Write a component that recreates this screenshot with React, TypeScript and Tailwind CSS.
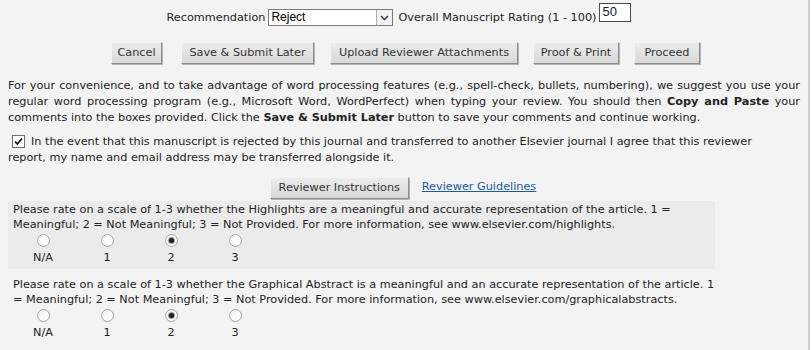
import type { ReactNode } from 'react';

const font = "font-['Verdana','DejaVu_Sans',sans-serif]";

function Btn({ w, children }: { w: string; children: ReactNode }) {
    return (
        <button
            type="button"
            className={`${w} h-[22px] shrink-0 border border-t-[#f4f4f4] border-l-[#f4f4f4] border-r-[#8c8c8c] border-b-[#8c8c8c] bg-gradient-to-b from-[#ececec] to-[#d8d8d8] text-[11.25px] leading-none text-[#333] shadow-[1px_1px_0_#b5b5b5]`}
        >
            {children}
        </button>
    );
}

function Radio({ checked = false }: { checked?: boolean }) {
    return (
        <span className="flex h-[13px] w-[13px] items-center justify-center rounded-full border border-[#a8a8a8] bg-gradient-to-br from-[#f2f2f2] to-white">
            {checked && <span className="h-[5px] w-[5px] rounded-full bg-[#1e1e1e] shadow-[0_0_0_1px_#9a9a9a]" />}
        </span>
    );
}

function RatingRow({ lines, shaded }: { lines: ReactNode; shaded?: boolean }) {
    const opts = ['N/A', '1', '2', '3'];
    return (
        <div className={`w-[707px] pb-[4px] pl-[5px] pt-[1px] ${shaded ? 'bg-[#ebebeb]' : ''}`}>
            <p className="leading-[15px]">{lines}</p>
            <div className="-ml-[2px] mt-[2px] flex">
                {opts.map((o) => (
                    <div key={o} className="flex w-[64px] flex-col items-center">
                        <Radio checked={o === '2'} />
                        <span className="mt-[4px] leading-[14px]">{o}</span>
                    </div>
                ))}
            </div>
        </div>
    );
}

export default function App() {
    return (
        <div className={`${font} min-h-[350px] w-[810px] border-r-2 border-[#cfcfcf] bg-[#f3f3f3] text-[11.25px] text-[#222]`}>
            <div className="flex items-start justify-center pr-[10px] pt-[3px]">
                <span className="mt-[7px]">Recommendation</span>
                <div className="ml-[3px] mt-[6px] flex h-[17px] w-[125px] border border-[#7b7b7b] bg-white">
                    <span className="flex-1 pl-[2px] font-['Liberation_Sans',Arial,sans-serif] text-[12px] leading-[15px] text-black">
                        Reject
                    </span>
                    <span className="flex w-[16px] items-center justify-center border-l border-[#b0b0b0] bg-[#f2f2f2]">
                        <svg width="9" height="6" viewBox="0 0 9 6">
                            <path d="M1 1l3.5 3.5L8 1" stroke="#333" strokeWidth="1.4" fill="none" />
                        </svg>
                    </span>
                </div>
                <span className="ml-[5px] mt-[7px]">Overall Manuscript Rating (1 - 100)</span>
                <div className="ml-[3px] h-[19px] w-[32px] border border-[#4a4a4a] bg-white pl-[2px] font-['Liberation_Sans',Arial,sans-serif] text-[13px] leading-[15px] text-[#102040]">
                    50
                </div>
            </div>

            <div className="mt-[15px] flex justify-center gap-[15px] pl-[3px]">
                <Btn w="w-[51px]">Cancel</Btn>
                <Btn w="w-[133px] ml-[4px]">Save &amp; Submit Later</Btn>
                <Btn w="w-[188px] ml-[1px]">Upload Reviewer Attachments</Btn>
                <Btn w="w-[86px]">Proof &amp; Print</Btn>
                <Btn w="w-[66px]">Proceed</Btn>
            </div>

            <div className="mt-[14px] w-[800px] pl-[8px] leading-[16px]">
                <div className="text-justify [text-align-last:justify]">
                    For your convenience, and to take advantage of word processing features (e.g., spell-check, bullets, numbering), we suggest you use your
                </div>
                <div className="text-justify [text-align-last:justify]">
                    regular word processing program (e.g., Microsoft Word, WordPerfect) when typing your review. You should then <b>Copy and Paste</b> your
                </div>
                <div>
                    comments into the boxes provided. Click the <b>Save &amp; Submit Later</b> button to save your comments and continue working.
                </div>
            </div>

            <div className="mt-[8px] pl-[8px] leading-[16px]">
                <div className="flex items-center">
                    <span className="ml-[4px] mr-[6px] flex h-[13px] w-[13px] items-center justify-center border border-[#707070] bg-white">
                        <svg width="9" height="9" viewBox="0 0 9 9">
                            <path d="M1 4.5l2.3 2.5L8 1.5" stroke="#1a1a1a" strokeWidth="1.8" fill="none" />
                        </svg>
                    </span>
                    In the event that this manuscript is rejected by this journal and transferred to another Elsevier journal I agree that this reviewer
                </div>
                <div>report, my name and email address may be transferred alongside it.</div>
            </div>

            <div className="mt-[11px] flex items-center justify-center gap-[13px] pr-[2px]">
                <Btn w="w-[139px]">Reviewer Instructions</Btn>
                <a href="#" className="text-[#1c5a9c] underline">
                    Reviewer Guidelines
                </a>
            </div>

            <div className="mt-[2px] pl-[8px]">
                <RatingRow
                    shaded
                    lines={
                        <>
                            Please rate on a scale of 1-3 whether the Highlights are a meaningful and accurate representation of the article. 1 =
                            <br />
                            Meaningful; 2 = Not Meaningful; 3 = Not Provided. For more information, see www.elsevier.com/highlights.
                        </>
                    }
                />
                <div className="mt-[7px]">
                    <RatingRow
                        lines={
                            <>
                                Please rate on a scale of 1-3 whether the Graphical Abstract is a meaningful and an accurate representation of the article. 1
                                <br />
                                = Meaningful; 2 = Not Meaningful; 3 = Not Provided. For more information, see www.elsevier.com/graphicalabstracts.
                            </>
                        }
                    />
                </div>
            </div>
        </div>
    );
}
